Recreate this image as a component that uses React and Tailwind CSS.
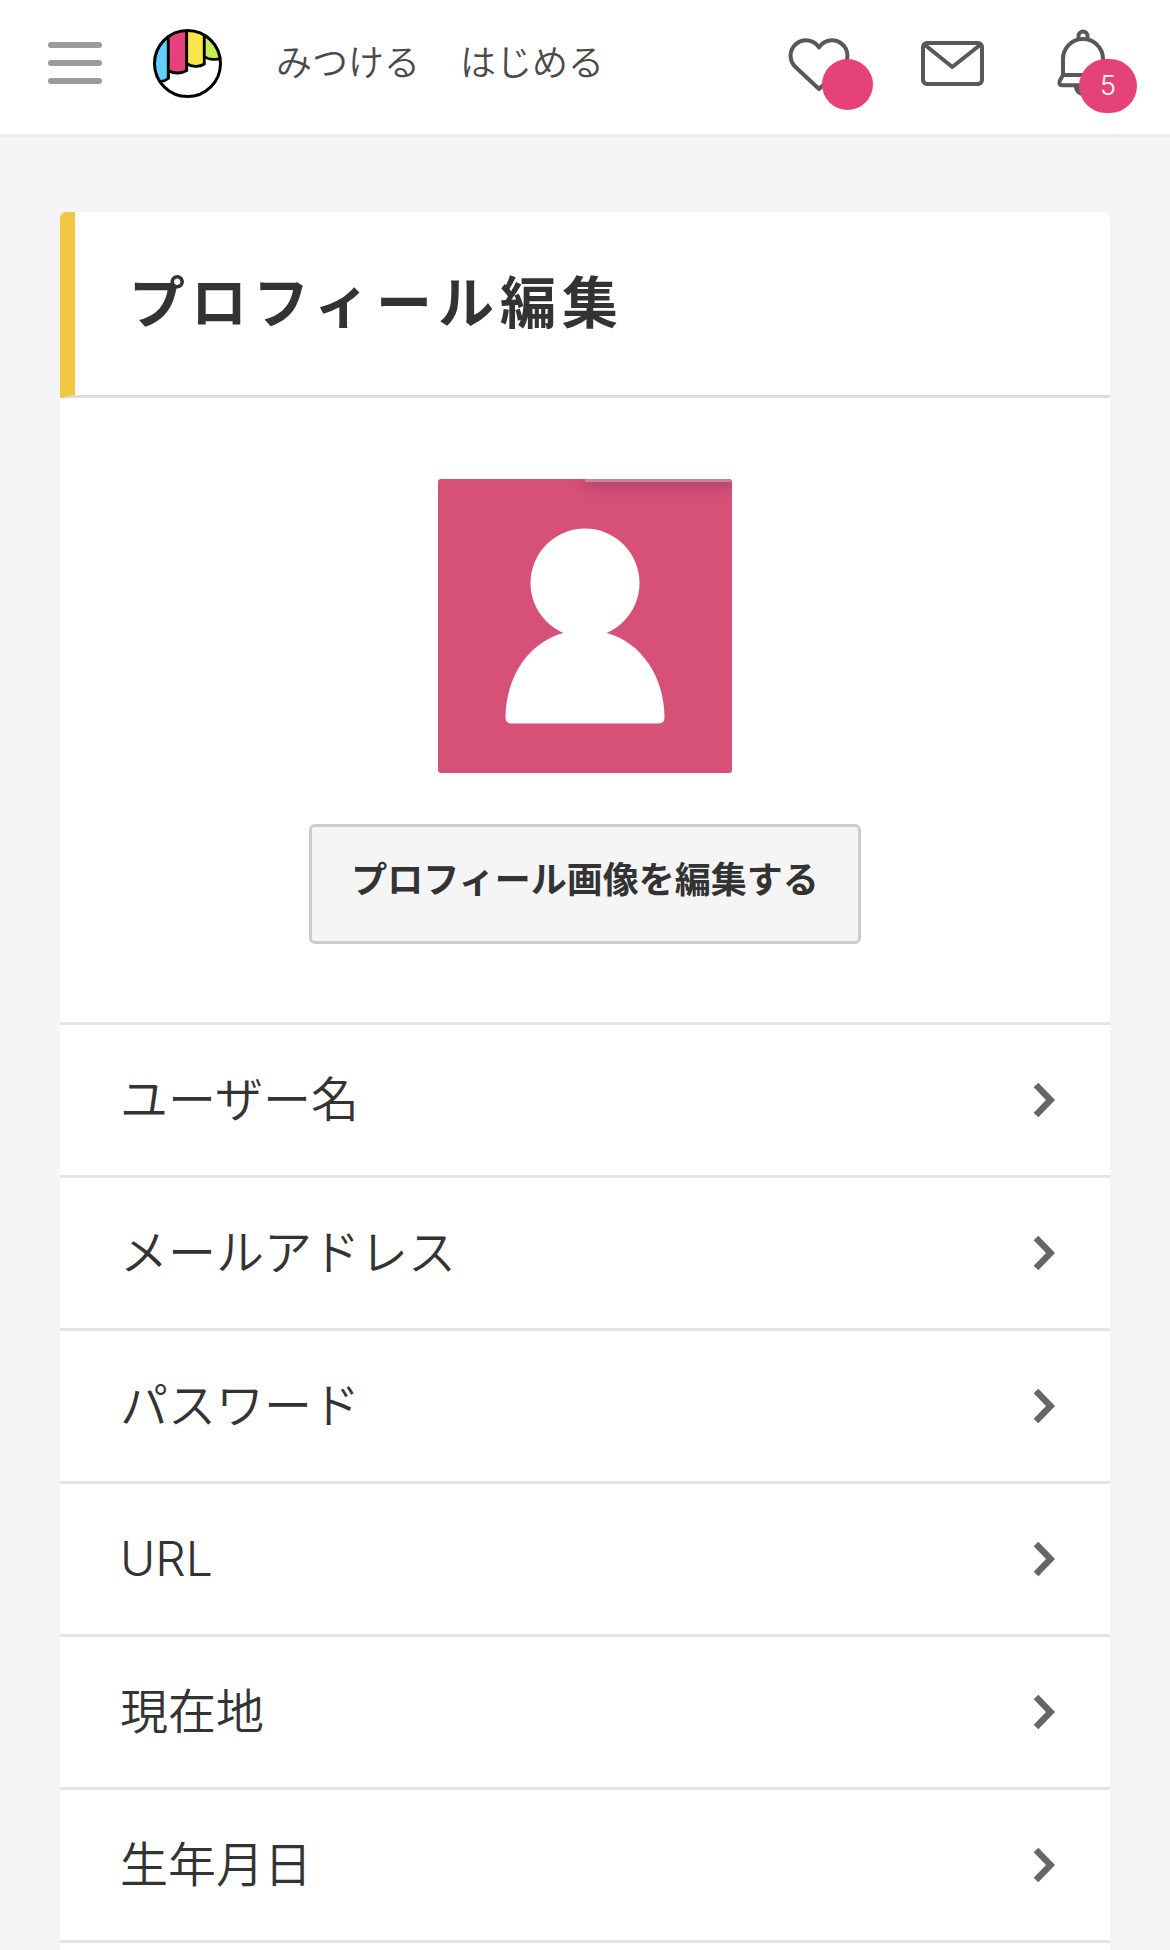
const items = ['ユーザー名', 'メールアドレス', 'パスワード', 'URL', '現在地', '生年月日'];

function Logo() {
  return (
    <svg viewBox="0 0 69 69" className="size-[69px]" aria-hidden="true">
      <defs>
        <clipPath id="logo-circle">
          <circle cx="34.5" cy="34.5" r="33" />
        </clipPath>
      </defs>
      <circle cx="34.5" cy="34.5" r="33" fill="#fff" />
      <g clipPath="url(#logo-circle)" stroke="#000" strokeWidth="2.8">
        <path d="M-3 -3H15.3V49.5Q10 53.5 5 52L-3 50Z" fill="#63cffa" />
        <path d="M15.3 -3H33.7V41.5Q29.5 44 24.5 44Q19 44 15.3 41.5Z" fill="#e6427a" />
        <path d="M33.7 -3H51.3V35Q47.5 37.5 42.5 37.3Q37.5 37.3 33.7 34.5Z" fill="#f9e54c" />
        <path d="M51.3 -3H72V28.5Q66 30.5 60.5 30.3Q55 30.3 51.3 27.5Z" fill="#c5f04f" />
      </g>
      <path d="M15.3 41V50M33.7 34V42" stroke="#000" strokeWidth="2.8" />
      <circle cx="34.5" cy="34.5" r="33" fill="none" stroke="#000" strokeWidth="3" />
    </svg>
  );
}

function HeartIcon() {
  return (
    <svg viewBox="0 0 60 54" className="h-[54px] w-[60px] overflow-visible" fill="none" stroke="#585858" strokeWidth="4" strokeLinejoin="round" aria-hidden="true">
      <path d="M30 11.5A15.4 15.4 0 1 0 6.5 31L30 53L53.5 31A15.4 15.4 0 1 0 30 11.5Z" />
    </svg>
  );
}

function MailIcon() {
  return (
    <svg viewBox="0 0 63 46" className="h-[46px] w-[63px]" fill="none" stroke="#585858" strokeWidth="4" strokeLinejoin="round" aria-hidden="true">
      <rect x="2" y="3" width="59" height="41" rx="4" />
      <path d="M4 5L31.3 27L59 5" />
    </svg>
  );
}

function BellIcon() {
  return (
    <svg viewBox="0 0 54 72" className="h-[72px] w-[54px]" fill="none" stroke="#585858" strokeWidth="4" strokeLinejoin="round" aria-hidden="true">
      <path d="M22.5 12V9A4.5 4.5 0 0 1 31.5 9V12" />
      <path d="M7 48V32A20 20 0 0 1 47 32V48Z" />
      <path d="M7 48L3.7 54Q2.5 58.3 6 58.3H48Q51.5 58.3 50.3 54L47 48" />
      <path d="M20 60A7 7 0 0 0 34 60Z" fill="#585858" />
    </svg>
  );
}

function Avatar() {
  return (
    <div className="relative size-[294px] overflow-hidden rounded-[3px] bg-[#d75078]">
      <svg viewBox="0 0 294 294" className="size-full" fill="#fff" role="img" aria-label="プロフィール画像">
        <circle cx="147" cy="104" r="54.5" />
        <path d="M125 154C90 164 68 198 67.5 238Q67.5 244.5 73 244.5H221Q226.5 244.5 226.5 238C226 198 204 164 169 154L147 148Z" />
      </svg>
      <div className="absolute top-0 right-0 h-[3px] w-1/2 bg-[#cf7f9f] shadow-[0_3px_12px_2px_rgba(90,50,80,0.4)]" />
    </div>
  );
}

function Header() {
  return (
    <header className="flex h-[137px] items-center justify-between border-b-[3px] border-[#eee] bg-white pr-[60px] pb-2 pl-12">
      <div className="flex items-center">
        <button type="button" aria-label="メニュー" className="flex w-[54px] flex-col gap-3">
          <span className="h-1.5 rounded-full bg-[#9b9b9b]" />
          <span className="h-1.5 rounded-full bg-[#9b9b9b]" />
          <span className="h-1.5 rounded-full bg-[#9b9b9b]" />
        </button>
        <a href="#" aria-label="ホーム" className="ml-[51px]">
          <Logo />
        </a>
        <nav className="ml-[54px] flex gap-10 text-[36px] leading-[54px] font-[350] text-[#4a4a4a]">
          <a href="#">みつける</a>
          <a href="#">はじめる</a>
        </nav>
      </div>
      <div className="flex items-center gap-[72px]">
        <a href="#" aria-label="お気に入り" className="relative">
          <HeartIcon />
          <span className="absolute top-[23px] left-[33px] size-[51px] rounded-full bg-[#e6427a]" />
        </a>
        <a href="#" aria-label="メッセージ">
          <MailIcon />
        </a>
        <a href="#" aria-label="お知らせ" className="relative">
          <BellIcon />
          <span className="absolute top-8 left-[23px] flex h-[54px] w-[58px] items-center justify-center rounded-full bg-[#e6427a] text-[27px] font-light text-white">
            5
          </span>
        </a>
      </div>
    </header>
  );
}

export default function App() {
  return (
    <div className="flex min-h-screen flex-col bg-[#f5f5f5] font-['Inter','Noto_Sans_CJK_JP',sans-serif] text-[#333]">
      <Header />
      <main className="mx-[60px] mt-[75px] flex-1 rounded-t-md bg-white">
        <h1 className="rounded-t-md border-b-[3px] border-l-[15px] border-b-[#ddd] border-l-[#f0c643] py-[51px] pl-[54px] text-[56px] leading-[81px] font-bold tracking-[6px]">
          プロフィール編集
        </h1>
        <section className="flex flex-col items-center gap-[51px] pt-[81px] pb-[78px]">
          <Avatar />
          <button type="button" className="rounded-md border-[3px] border-[#ccc] bg-[#f5f5f5] px-[39px] pt-[26px] pb-[34px] text-[36px] leading-[54px] font-bold">
            プロフィール画像を編集する
          </button>
        </section>
        <ul className="border-b-[3px] border-[#e5e5e5]">
          {items.map((item) => (
            <li key={item} className="border-t-[3px] border-[#e5e5e5]">
              <a href="#" className="flex items-center justify-between py-[39px] pr-[54px] pl-[60px] text-[48px] leading-[72px] font-[350]">
                {item}
                <svg viewBox="0 0 24 36" className="h-9 w-6" fill="none" stroke="#666" strokeWidth="6.5" aria-hidden="true">
                  <path d="M4 3L18.5 18L4 33" />
                </svg>
              </a>
            </li>
          ))}
        </ul>
      </main>
    </div>
  );
}
